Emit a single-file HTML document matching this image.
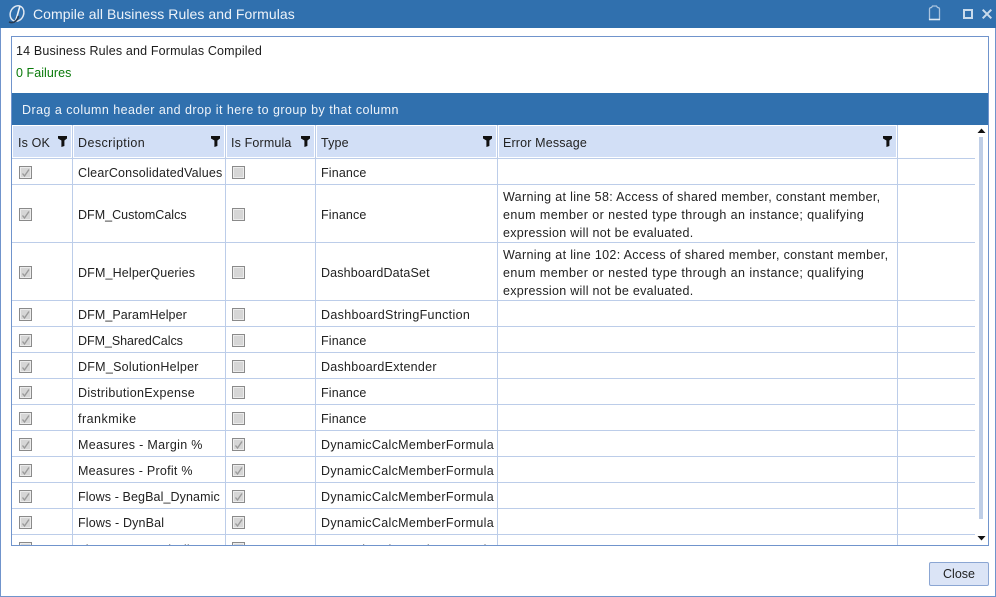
<!DOCTYPE html>
<html><head><meta charset="utf-8"><style>
*{box-sizing:border-box}
html,body{margin:0;padding:0;width:996px;height:597px;overflow:hidden;background:#fff}
body{position:relative;font:12.5px/16px "Liberation Sans",sans-serif;color:#222}
.a{position:absolute}
.t{position:absolute;white-space:nowrap;letter-spacing:.15px}
.t span{display:block}
.h{position:absolute;background:#d2dff6;top:126px;height:31px}
.hl{position:absolute;left:12px;width:963px;height:1px;background:#bccde9}
.vl{position:absolute;top:125px;height:420px;width:1px;background:#bccde9}
.c{position:absolute;width:13px;height:13px;border:1px solid #8a8a8a;background:#d6d6d6;box-shadow:inset 0 0 0 1px #ececec}
.c svg{position:absolute;left:0;top:0}
.f{position:absolute;top:136px}
</style></head><body>
<svg width="0" height="0" style="position:absolute"><defs>
<symbol id="ck" viewBox="0 0 11 11"><path d="M2.5 6.5L4.5 9L9 2.5" fill="none" stroke="#9a9a9a" stroke-width="1.4"/></symbol>
<symbol id="fn" viewBox="0 0 9 11"><path d="M0 0H9V2.5L6.4 4.5V10L3.4 11V4.5L0 2.5Z" fill="#111"/></symbol>
</defs></svg>
<div class="a" style="left:0;top:0;width:996px;height:597px;border:1px solid #7094cc;border-top:0"></div>
<div class="a" style="left:0;top:0;width:996px;height:28px;background:#3070ae"></div>
<svg class="a" style="left:6px;top:3px" width="22" height="22" viewBox="0 0 22 22"><ellipse cx="11" cy="10.5" rx="6.6" ry="8" fill="none" stroke="#dfe7f1" stroke-width="1.5" transform="rotate(25 11 10.5)"/><path d="M9 19C11 15 12 9 14 3" fill="none" stroke="#eef3f8" stroke-width="1.6"/><path d="M3 19C7 20.5 11 19 12.5 13" fill="none" stroke="#263a52" stroke-width="1.7"/></svg>
<div class="t" style="left:33px;top:5px;font-size:14px;line-height:18px;letter-spacing:.07px;color:#eef3f9">Compile all Business Rules and Formulas</div>
<svg class="a" style="left:927px;top:5px" width="15" height="16" viewBox="0 0 15 16"><path d="M2.5 14.5V4Q2.5 2.5 4.5 2.5L5.5 1H9.5L10.5 2.5Q12.5 2.5 12.5 4V14.5Z" fill="none" stroke="#a9c3de" stroke-width="1.3"/><path d="M2 14.5H13" stroke="#dfe9f3" stroke-width="1.5"/></svg>
<div class="a" style="left:963px;top:9px;width:10px;height:10px;border:2px solid #c9dbec"></div>
<svg class="a" style="left:982px;top:9px" width="10" height="10" viewBox="0 0 10 10"><path d="M0.7 0.7L9.3 9.3M9.3 0.7L0.7 9.3" stroke="#c9dbec" stroke-width="2"/></svg>

<div class="a" style="left:11px;top:36px;width:978px;height:510px;border:1px solid #7094cc;background:#fff"></div>
<div class="t" style="left:16px;top:43px;color:#1c1c1c;letter-spacing:.16px">14 Business Rules and Formulas Compiled</div>
<div class="t" style="left:16px;top:65px;color:#0a7a0a;letter-spacing:.05px">0 Failures</div>
<div class="a" style="left:12px;top:93px;width:976px;height:32px;background:#3070ae"></div>
<div class="t" style="left:22px;top:102px;color:#eef3f9;letter-spacing:.46px">Drag a column header and drop it here to group by that column</div>

<div class="h" style="left:13px;width:58px"></div>
<div class="h" style="left:74px;width:150px"></div>
<div class="h" style="left:227px;width:87px"></div>
<div class="h" style="left:317px;width:179px"></div>
<div class="h" style="left:499px;width:397px"></div>

<div class="vl" style="left:72px"></div><div class="vl" style="left:225px"></div><div class="vl" style="left:315px"></div><div class="vl" style="left:497px"></div><div class="vl" style="left:897px"></div>
<div class="hl" style="top:158px"></div><div class="hl" style="top:184px"></div><div class="hl" style="top:242px"></div><div class="hl" style="top:300px"></div><div class="hl" style="top:326px"></div><div class="hl" style="top:352px"></div><div class="hl" style="top:378px"></div><div class="hl" style="top:404px"></div><div class="hl" style="top:430px"></div><div class="hl" style="top:456px"></div><div class="hl" style="top:482px"></div><div class="hl" style="top:508px"></div><div class="hl" style="top:534px"></div>

<div class="t" style="left:18px;top:135px">Is OK</div>
<div class="t" style="left:78px;top:135px;letter-spacing:.42px">Description</div>
<div class="t" style="left:231px;top:135px">Is Formula</div>
<div class="t" style="left:321px;top:135px">Type</div>
<div class="t" style="left:503px;top:135px">Error Message</div>
<svg class="f" style="left:58px" width="9" height="11"><use href="#fn"/></svg>
<svg class="f" style="left:211px" width="9" height="11"><use href="#fn"/></svg>
<svg class="f" style="left:301px" width="9" height="11"><use href="#fn"/></svg>
<svg class="f" style="left:483px" width="9" height="11"><use href="#fn"/></svg>
<svg class="f" style="left:883px" width="9" height="11"><use href="#fn"/></svg>

<div class="t" style="left:78px;top:165px;letter-spacing:.19px">ClearConsolidatedValues</div><div class="t" style="left:321px;top:165px">Finance</div>
<div class="t" style="left:78px;top:207px;letter-spacing:.02px">DFM_CustomCalcs</div><div class="t" style="left:321px;top:207px">Finance</div>
<div class="t" style="left:503px;top:188px;line-height:18px"><span style="letter-spacing:.33px">Warning at line 58: Access of shared member, constant member,</span><span style="letter-spacing:.43px">enum member or nested type through an instance; qualifying</span><span style="letter-spacing:.3px">expression will not be evaluated.</span></div>
<div class="t" style="left:78px;top:265px">DFM_HelperQueries</div><div class="t" style="left:321px;top:265px">DashboardDataSet</div>
<div class="t" style="left:503px;top:246px;line-height:18px"><span style="letter-spacing:.34px">Warning at line 102: Access of shared member, constant member,</span><span style="letter-spacing:.43px">enum member or nested type through an instance; qualifying</span><span style="letter-spacing:.3px">expression will not be evaluated.</span></div>
<div class="t" style="left:78px;top:307px;letter-spacing:.08px">DFM_ParamHelper</div><div class="t" style="left:321px;top:307px;letter-spacing:.32px">DashboardStringFunction</div>
<div class="t" style="left:78px;top:333px;letter-spacing:-.05px">DFM_SharedCalcs</div><div class="t" style="left:321px;top:333px">Finance</div>
<div class="t" style="left:78px;top:359px;letter-spacing:.26px">DFM_SolutionHelper</div><div class="t" style="left:321px;top:359px;letter-spacing:.27px">DashboardExtender</div>
<div class="t" style="left:78px;top:385px;letter-spacing:.31px">DistributionExpense</div><div class="t" style="left:321px;top:385px">Finance</div>
<div class="t" style="left:78px;top:411px;letter-spacing:.48px">frankmike</div><div class="t" style="left:321px;top:411px">Finance</div>
<div class="t" style="left:78px;top:437px;letter-spacing:.31px">Measures - Margin %</div><div class="t" style="left:321px;top:437px;letter-spacing:.32px">DynamicCalcMemberFormula</div>
<div class="t" style="left:78px;top:463px;letter-spacing:.26px">Measures - Profit %</div><div class="t" style="left:321px;top:463px;letter-spacing:.32px">DynamicCalcMemberFormula</div>
<div class="t" style="left:78px;top:489px;letter-spacing:.1px">Flows - BegBal_Dynamic</div><div class="t" style="left:321px;top:489px;letter-spacing:.32px">DynamicCalcMemberFormula</div>
<div class="t" style="left:78px;top:515px">Flows - DynBal</div><div class="t" style="left:321px;top:515px;letter-spacing:.32px">DynamicCalcMemberFormula</div>

<div class="c" style="left:19px;top:166px"><svg width="11" height="11"><use href="#ck"/></svg></div><div class="c" style="left:232px;top:166px"></div>
<div class="c" style="left:19px;top:208px"><svg width="11" height="11"><use href="#ck"/></svg></div><div class="c" style="left:232px;top:208px"></div>
<div class="c" style="left:19px;top:266px"><svg width="11" height="11"><use href="#ck"/></svg></div><div class="c" style="left:232px;top:266px"></div>
<div class="c" style="left:19px;top:308px"><svg width="11" height="11"><use href="#ck"/></svg></div><div class="c" style="left:232px;top:308px"></div>
<div class="c" style="left:19px;top:334px"><svg width="11" height="11"><use href="#ck"/></svg></div><div class="c" style="left:232px;top:334px"></div>
<div class="c" style="left:19px;top:360px"><svg width="11" height="11"><use href="#ck"/></svg></div><div class="c" style="left:232px;top:360px"></div>
<div class="c" style="left:19px;top:386px"><svg width="11" height="11"><use href="#ck"/></svg></div><div class="c" style="left:232px;top:386px"></div>
<div class="c" style="left:19px;top:412px"><svg width="11" height="11"><use href="#ck"/></svg></div><div class="c" style="left:232px;top:412px"></div>
<div class="c" style="left:19px;top:438px"><svg width="11" height="11"><use href="#ck"/></svg></div><div class="c" style="left:232px;top:438px"><svg width="11" height="11"><use href="#ck"/></svg></div>
<div class="c" style="left:19px;top:464px"><svg width="11" height="11"><use href="#ck"/></svg></div><div class="c" style="left:232px;top:464px"><svg width="11" height="11"><use href="#ck"/></svg></div>
<div class="c" style="left:19px;top:490px"><svg width="11" height="11"><use href="#ck"/></svg></div><div class="c" style="left:232px;top:490px"><svg width="11" height="11"><use href="#ck"/></svg></div>
<div class="c" style="left:19px;top:516px"><svg width="11" height="11"><use href="#ck"/></svg></div><div class="c" style="left:232px;top:516px"><svg width="11" height="11"><use href="#ck"/></svg></div>

<div class="a" style="left:12px;top:535px;width:963px;height:10px;overflow:hidden">
<div class="c" style="left:7px;top:7px"></div><div class="c" style="left:220px;top:7px"></div>
<div class="t" style="left:66px;top:7px">Flows - YearEndAdj</div><div class="t" style="left:309px;top:7px;letter-spacing:.32px">DynamicCalcMemberFormula</div>
</div>

<div class="a" style="left:976px;top:126px;width:11px;height:419px;background:#fff"></div>
<svg class="a" style="left:977px;top:128px" width="9" height="6"><path d="M4.5 0.5L8.5 5H0.5Z" fill="#111"/></svg>
<div class="a" style="left:979px;top:137px;width:4px;height:382px;background:#bfcee6"></div>
<svg class="a" style="left:977px;top:535px" width="9" height="6"><path d="M4.5 5.5L8.5 1H0.5Z" fill="#111"/></svg>

<div class="a" style="left:929px;top:562px;width:60px;height:24px;background:#dbe4f6;border:1px solid #8ba6d3;border-radius:2px;text-align:center;line-height:23px;color:#222">Close</div>
</body></html>
